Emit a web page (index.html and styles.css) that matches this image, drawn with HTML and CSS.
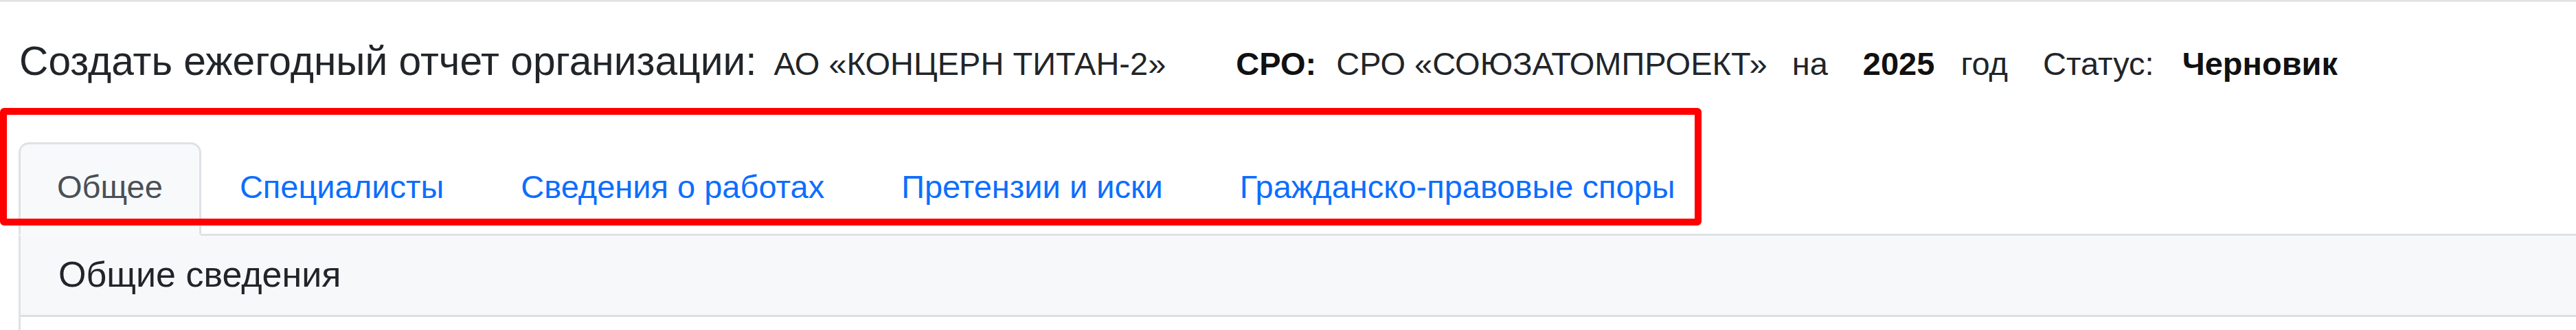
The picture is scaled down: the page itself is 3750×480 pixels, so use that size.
FILE: index.html
```html
<!DOCTYPE html>
<html lang="ru">
<head>
<meta charset="utf-8">
<link rel="stylesheet" href="styles.css">
</head>
<body>
<div class="topbar"></div>
<main class="page">
  <div class="heading">
    <span class="title">Создать ежегодный отчет организации:</span>
    <span class="info org">АО «КОНЦЕРН ТИТАН-2»</span>
    <span class="info sro"><b>СРО:</b></span>
    <span class="info sro-name">СРО «СОЮЗАТОМПРОЕКТ»</span>
    <span class="info na">на</span>
    <span class="info year"><b>2025</b></span>
    <span class="info god">год</span>
    <span class="info status">Статус:</span>
    <span class="info draft"><b>Черновик</b></span>
  </div>
  <div class="tabs-wrap">
    <nav class="tabs">
      <a class="tab active">Общее</a>
      <a class="tab">Специалисты</a>
      <a class="tab">Сведения о работах</a>
      <a class="tab">Претензии и иски</a>
      <a class="tab">Гражданско-правовые споры</a>
    </nav>
    <div class="highlight"></div>
  </div>
  <section class="card">
    <div class="card-header">Общие сведения</div>
    <div class="card-body"></div>
  </section>
</main>
</body>
</html>
```
FILE: styles.css
```css
html, body {
  margin: 0;
  padding: 0;
  background: #fff;
  overflow: hidden;
}
body {
  font-family: "Liberation Sans", Arial, sans-serif;
  color: #212529;
  height: 480px;
}
.topbar {
  height: 3px;
  background: linear-gradient(#dcdcdc, #efefef);
}
.page {
  padding-left: 27px;
}
.heading {
  display: flex;
  align-items: baseline;
  height: 120px;
  box-sizing: border-box;
  white-space: nowrap;
}
.title {
  font-size: 58.7px;
  line-height: 1;
  margin-top: 57px;
  margin-left: 1px;
}
.info {
  font-size: 47px;
  color: #212529;
}
.info b { font-weight: 700; color: #111; }
.org { margin-left: 25px; }
.sro { margin-left: 102px; }
.sro-name { margin-left: 29px; }
.na { margin-left: 36px; }
.year { margin-left: 51px; }
.god { margin-left: 38px; }
.status { margin-left: 51px; }
.draft { margin-left: 41px; }

.tabs-wrap {
  position: relative;
  padding-top: 84px;
}
.tabs {
  display: flex;
  align-items: flex-end;
  border-bottom: 3px solid #dee2e6;
}
.tab {
  font-size: 47px;
  line-height: 1;
  padding: 38px 53px 45px;
  margin-bottom: -3px;
  color: #0d6efd;
  border: 3px solid transparent;
  border-radius: 15px 15px 0 0;
  white-space: nowrap;
}
.tab.active {
  color: #495057;
  background: #f8f9fa;
  border-color: #dee2e6 #dee2e6 #f8f9fa;
}
.highlight {
  position: absolute;
  left: -27px;
  top: 34px;
  width: 2477px;
  height: 171px;
  box-sizing: border-box;
  border: 10px solid #ff0000;
  border-radius: 6px;
}
.card {
  margin-right: -20px;
  border: 3px solid #dee2e6;
  border-top: 0;
}
.card-header {
  background: #f7f8fa;
  font-size: 52px;
  line-height: 1;
  padding: 30px 0 33px 55px;
  border-bottom: 3px solid #dedfe1;
  color: #212529;
}
.card-body {
  height: 200px;
}
```
